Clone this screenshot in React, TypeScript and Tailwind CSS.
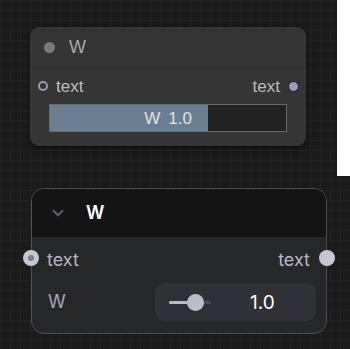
import React from "react";

export default function App() {
  return (
    <div className="relative w-[350px] h-[349px] overflow-hidden bg-[#1b1b1b] bg-[linear-gradient(to_right,#232323_1px,transparent_1px),linear-gradient(to_bottom,#232323_1px,transparent_1px)] bg-[size:10px_10px]" style={{ fontFamily: "Arial, 'Liberation Sans', sans-serif" }}>
      <div className="absolute right-0 top-0 w-[13px] h-[176px] bg-white" />

      {/* Top litegraph-style node */}
      <div className="absolute left-[30px] top-[27px] w-[276px] h-[119px] rounded-[9px] bg-[#353535] shadow-[0_2px_6px_rgba(0,0,0,0.5)] flex flex-col" style={{ fontFamily: "'Liberation Sans', Arial, sans-serif" }}>
        <div className="h-[41px] flex items-center border-b border-[#2b2b2b] px-[14px] gap-[14px]">
          <div className="w-[11px] h-[11px] rounded-full bg-[#7a7a7a]" />
          <span className="text-[18px] text-[#a8a8a8] leading-none">W</span>
        </div>
        <div className="flex items-center justify-between h-[36px] pl-[8px] pr-[7px]">
          <div className="flex items-center gap-[8px]">
            <div className="w-[10px] h-[10px] rounded-full border-[2px] border-[#9d9bb5] bg-[#353535]" />
            <span className="text-[17px] text-[#bdbdbd] leading-none">text</span>
          </div>
          <div className="flex items-center gap-[8px]">
            <span className="text-[17px] text-[#bdbdbd] leading-none">text</span>
            <div className="w-[11px] h-[11px] rounded-full bg-[#9d9bb5] border border-[#1a1a1a]" />
          </div>
        </div>
        <div className="mx-[19px] h-[28px] border border-[#6a6a6a] bg-[#222222] relative flex">
          <div className="w-[158px] h-full bg-[#6a7f92]" />
          <div className="absolute inset-0 flex items-center justify-center gap-[8px] text-[17px] text-[#e0e0e0] leading-none">
            <span>W</span>
            <span>1.0</span>
          </div>
        </div>
      </div>

      {/* Bottom modern node */}
      <div className="absolute left-[31px] top-[188px] w-[296px] h-[146px]" style={{ fontFamily: "Inter, 'Noto Sans', sans-serif" }}>
        <div className="w-full h-full rounded-[13px] border border-[#4e4e52] bg-[#262729] overflow-hidden flex flex-col">
          <div className="h-[48px] bg-[#141415] flex items-center pl-[17px] gap-[19px]">
            <svg width="18" height="18" viewBox="0 0 24 24" fill="none" stroke="#5f5e7a" strokeWidth="2.6" strokeLinecap="round" strokeLinejoin="round">
              <path d="M6 9l6 6 6-6" />
            </svg>
            <span className="text-[18px] font-semibold text-white leading-none">W</span>
          </div>
          <div className="flex items-center justify-between h-[44px] pl-[15px] pr-[16px] mt-[1px]">
            <span className="text-[18px] text-[#b6b5c2] leading-none">text</span>
            <span className="text-[18px] text-[#b6b5c2] leading-none">text</span>
          </div>
          <div className="flex items-center justify-between pl-[16px] pr-[10px] h-[40px]">
            <span className="text-[18px] text-[#a9a8b6] leading-none">W</span>
            <div className="w-[161px] h-[38px] rounded-[9px] bg-[#303136] flex items-center pl-[14px]">
              <div className="relative w-[42px] h-[16px] flex items-center">
                <div className="w-full h-[3px] bg-[#4a4a50] rounded-full" />
                <div className="absolute left-0 w-[22px] h-[3px] bg-[#bcbbc8] rounded-full" />
                <div className="absolute left-[18px] w-[17px] h-[17px] rounded-full bg-[#bdbcca]" />
              </div>
              <span className="ml-[39px] text-[19px] text-white leading-none">1.0</span>
            </div>
          </div>
        </div>
        <div className="absolute left-[-8px] top-[62px] w-[16px] h-[16px] rounded-full bg-[#c7c6d3] flex items-center justify-center">
          <div className="w-[6px] h-[6px] rounded-full bg-[#7d7c90]" />
        </div>
        <div className="absolute right-[-8px] top-[62px] w-[16px] h-[16px] rounded-full bg-[#c7c6d3]" />
      </div>
    </div>
  );
}
